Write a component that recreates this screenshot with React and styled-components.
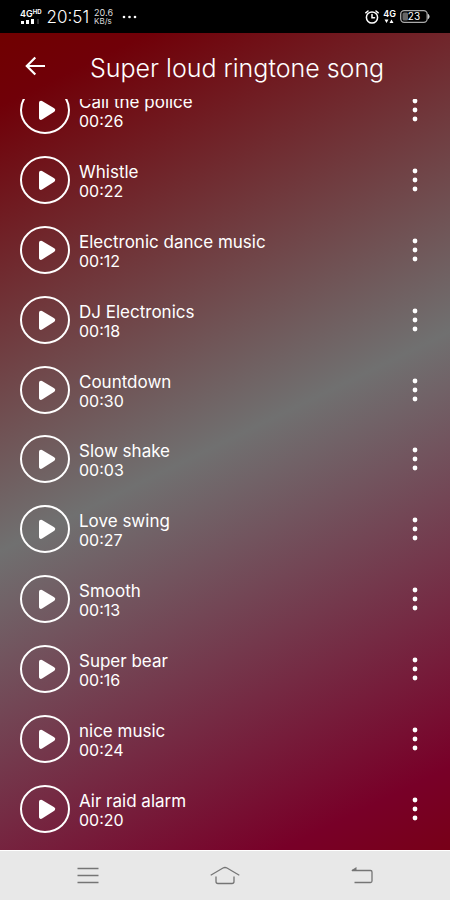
import React from 'react'
import styled, { createGlobalStyle } from 'styled-components'

const GlobalStyle = createGlobalStyle`
* { box-sizing: border-box; }
body {
  margin: 0;
  background: #000;
  font-family: Inter, Roboto, sans-serif;
}
`
const Screen = styled.div`
height: 100vh;
min-height: 640px;
display: flex;
flex-direction: column;
overflow: hidden;
`
const StatusBar = styled.div`
height: 33px;
flex: none;
padding: 0 20px;
display: flex;
align-items: center;
justify-content: space-between;
background: #000;
color: #fff;
`
const StatusGroup = styled.div`
display: flex;
align-items: center;
gap: ${(p) => p.$gap}px;
svg { display: block; }
`
const Signal = styled.div`
display: flex;
flex-direction: column;
`
const Network = styled.span`
display: flex;
font-size: 9px;
line-height: 10px;
font-weight: 600;
`
const Hd = styled.span`
font-size: 6px;
line-height: 6px;
font-weight: 700;
`
const Clock = styled.span`
font-size: 17px;
line-height: 20px;
font-weight: 300;
`
const Speed = styled.div`
display: flex;
flex-direction: column;
color: #ddd;
`
const SpeedText = styled.span`
font-size: ${(p) => p.$size}px;
line-height: ${(p) => p.$size}px;
`
const Main = styled.main`
flex: 1;
min-height: 0;
display: flex;
flex-direction: column;
color: #fff;
background: linear-gradient(154deg, #700000 0%, #700008 7%, #707070 50%, #780028 92%, #780018 100%);
`
const Header = styled.header`
height: 66px;
flex: none;
padding: 0 20px;
display: flex;
align-items: center;
gap: 40px;
`
const IconButton = styled.button`
width: ${(p) => p.$width}px;
height: ${(p) => p.$height}px;
flex: none;
padding: 0;
border: 0;
display: flex;
align-items: center;
justify-content: center;
background: none;
color: inherit;
cursor: pointer;
`
const Title = styled.h1`
margin: 0;
padding-top: 4px;
font-size: 25px;
line-height: 30px;
font-weight: 330;
white-space: nowrap;
`
const ListArea = styled.div`
flex: 1;
min-height: 0;
display: flex;
overflow: hidden;
`
const List = styled.ul`
flex: 1;
margin: -24px 0 0;
padding: 0 0 6px;
list-style: none;
display: grid;
grid-auto-rows: 1fr;
`
const Row = styled.li`
padding: 0 20px;
display: flex;
align-items: center;
gap: 9px;
`
const Info = styled.div`
flex: 1;
padding-top: 3px;
`
const Name = styled.div`
font-size: 17px;
line-height: 20px;
font-weight: 380;
`
const Time = styled.div`
font-size: 16px;
line-height: 19px;
font-weight: 380;
`
const NavBar = styled.nav`
height: 50px;
flex: none;
padding: 0 40px;
display: flex;
align-items: center;
justify-content: space-between;
border-top: 1px solid #fff;
background: #e8e8e8;
color: #757575;
`

const songs = [
  { name: 'Call the police', time: '00:26' },
  { name: 'Whistle', time: '00:22' },
  { name: 'Electronic dance music', time: '00:12' },
  { name: 'DJ Electronics', time: '00:18' },
  { name: 'Countdown', time: '00:30' },
  { name: 'Slow shake', time: '00:03' },
  { name: 'Love swing', time: '00:27' },
  { name: 'Smooth', time: '00:13' },
  { name: 'Super bear', time: '00:16' },
  { name: 'nice music', time: '00:24' },
  { name: 'Air raid alarm', time: '00:20' },
]

function Status() {
  return (
    <StatusBar>
      <StatusGroup $gap={5}>
        <Signal>
          <Network>4G<Hd>HD</Hd></Network>
          <svg width="21" height="5" viewBox="0 0 21 5" fill="#fff">
            <rect x="1" y="2" width="3" height="3" />
            <rect x="6" y="1" width="3" height="4" />
            <rect x="11" y="0" width="3" height="5" />
            <rect x="17" y="0" width="2" height="5" fill="#333" />
          </svg>
        </Signal>
        <Clock>20:51</Clock>
        <Speed>
          <SpeedText $size={9}>20.6</SpeedText>
          <SpeedText $size={8}>KB/s</SpeedText>
        </Speed>
        <svg width="22" height="4" viewBox="0 0 22 4" fill="#fff">
          <circle cx="6" cy="2" r="1.3" />
          <circle cx="11.500" cy="2" r="1.3" />
          <circle cx="17" cy="2" r="1.3" />
        </svg>
      </StatusGroup>
      <StatusGroup $gap={4}>
        <svg width="14" height="14" viewBox="0 0 14 14" fill="none" stroke="#fff" strokeWidth="1.500" strokeLinecap="round">
          <circle cx="7" cy="7.500" r="5.600" />
          <path d="M7 4.500V7.800H9.500M0.800 2.800L3 1M13.200 2.800L11 1" />
        </svg>
        <Signal>
          <Network>4G</Network>
          <svg width="12" height="5" viewBox="0 0 12 5" fill="#fff">
            <path d="M1.500 0.500H5.500L3.500 4ZM6.500 4H10.500L8.500 0.500Z" />
          </svg>
        </Signal>
        <svg width="30" height="13" viewBox="0 0 30 13">
          <rect x="0.700" y="0.700" width="26.500" height="11.600" rx="3.500" fill="none" stroke="#aaa" strokeWidth="1.300" />
          <rect x="2.500" y="2.500" width="5.500" height="8" rx="1.500" fill="#666" />
          <path d="M28.500 4.500Q29.700 6.500 28.500 8.500Z" fill="#ccc" stroke="#ccc" />
          <text x="14" y="10" fontSize="10" textAnchor="middle" fill="#fff">23</text>
        </svg>
      </StatusGroup>
    </StatusBar>
  )
}

function Song({ name, time }) {
  return (
    <Row>
      <IconButton $width={50} $height={50} aria-label={`Play ${name}`}>
        <svg width="50" height="50" viewBox="0 0 50 50">
          <ellipse cx="25" cy="25" rx="24" ry="23" fill="none" stroke="#fff" strokeWidth="2" />
          <path d="M21 17.800L33.200 25L21 32.900Z" fill="#fff" stroke="#fff" strokeWidth="4" strokeLinejoin="round" />
        </svg>
      </IconButton>
      <Info>
        <Name>{name}</Name>
        <Time>{time}</Time>
      </Info>
      <IconButton $width={30} $height={40} aria-label={`More options for ${name}`}>
        <svg width="30" height="24" viewBox="0 0 30 24" fill="#fff">
          <circle cx="15" cy="3" r="2.400" />
          <circle cx="15" cy="12" r="2.400" />
          <circle cx="15" cy="21" r="2.400" />
        </svg>
      </IconButton>
    </Row>
  )
}

function App() {
  return (
    <Screen>
      <GlobalStyle />
      <Status />
      <Main>
        <Header>
          <IconButton $width={30} $height={30} aria-label="Back">
            <svg width="30" height="30" viewBox="0 0 30 30" fill="none" stroke="#fff" strokeWidth="2.200">
              <path d="M25 15H7M15.300 6.500L6.800 15L15.300 23.500" />
            </svg>
          </IconButton>
          <Title>Super loud ringtone song</Title>
        </Header>
        <ListArea>
          <List>
            {songs.map((song) => (
              <Song key={song.name} name={song.name} time={song.time} />
            ))}
          </List>
        </ListArea>
      </Main>
      <NavBar>
        <IconButton $width={96} $height={40} aria-label="Recent apps">
          <svg width="22" height="18" viewBox="0 0 22 18" stroke="currentColor" strokeWidth="1.300">
            <path d="M0.500 1.500H21.500M0.500 8.500H21.500M0.500 15.500H21.500" />
          </svg>
        </IconButton>
        <IconButton $width={96} $height={40} aria-label="Home">
          <svg width="30" height="20" viewBox="0 0 30 20" fill="none" stroke="currentColor" strokeWidth="1.300">
            <path d="M0.700 9.200L13 2Q15 1 17 2L29.300 9.200M6 10.500V15.500Q6 17.500 8 17.500H22Q24 17.500 24 15.500V10.500" />
          </svg>
        </IconButton>
        <IconButton $width={96} $height={40} aria-label="Back to previous screen">
          <svg width="24" height="20" viewBox="0 0 24 20" fill="none" stroke="currentColor" strokeWidth="1.300">
            <path d="M2 4.500H20.500Q22 4.500 22 6V15Q22 16.500 20.500 16.500H4.500" />
            <path d="M1 4.500L6.500 1V4.500Z" fill="currentColor" stroke="none" />
          </svg>
        </IconButton>
      </NavBar>
    </Screen>
  )
}

export default App
